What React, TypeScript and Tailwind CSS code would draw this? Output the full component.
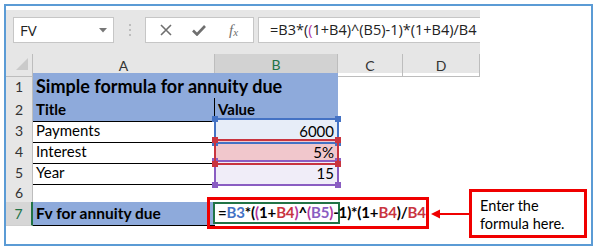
import React from "react";

const LATO = "[font-family:Lato,'Noto_Sans',sans-serif]";

function RowHead({ n, sel }: { n: number; sel?: boolean }) {
  return (
    <div
      className={
        "flex items-center justify-center border-b border-[#cfcfcf] text-[14px] " +
        LATO +
        (sel
          ? " bg-[#d6d6d6] text-[#217346] border-r-2 border-r-[#217346]"
          : " bg-[#e6e6e6] text-[#333] border-r border-r-[#bdbdbd]")
      }
    >
      {n}
    </div>
  );
}

function Range({ color, top }: { color: string; top?: boolean }) {
  const sq = "absolute w-[6px] h-[6px]";
  const z = top ? " z-20" : " z-10";
  return (
    <>
      <div className={"absolute left-[-1px] right-[-1px] top-[-1px] bottom-[-1px] border-2 pointer-events-none" + z} style={{ borderColor: color }} />
      <div className={sq + " left-[-3px] top-[-3px]" + z} style={{ background: color }} />
      <div className={sq + " right-[-3px] top-[-3px]" + z} style={{ background: color }} />
      <div className={sq + " left-[-3px] bottom-[-3px]" + z} style={{ background: color }} />
      <div className={sq + " right-[-3px] bottom-[-3px]" + z} style={{ background: color }} />
    </>
  );
}

const BLUE = "#4472c4";
const RED = "#c9343f";
const PURPLE = "#8a5dc2";
const MAG = "#b0359e";

export default function App() {
  const row = "grid grid-cols-[27px_182px_123px_65px_77px]";
  return (
    <div className="w-[598px] h-[252px] bg-white pt-[4px] pl-[4px] overflow-hidden">
      <div className="relative w-[589px] h-[242px] border-2 border-[#5b9bd5] pt-[4px] bg-white">
        <div className="w-[474px] bg-[#e6e6e6]">
          {/* formula bar */}
          <div className="h-[44px] flex items-start pt-[7px] pl-[7px]">
            <div className="w-[101px] h-[26px] bg-white border border-[#c6c6c6] flex items-center justify-between pl-[6px] pr-[6px]">
              <span className="text-[15px] text-[#222] [font-family:'Open_Sans',sans-serif]">FV</span>
              <svg width="8" height="5" viewBox="0 0 8 5"><polygon points="0,0 8,0 4,4.5" fill="#777" /></svg>
            </div>
            <div className="w-[31px] h-[26px] flex flex-col items-center justify-center gap-[3px]">
              <div className="w-[2px] h-[2px] bg-[#bdbdbd]" />
              <div className="w-[2px] h-[2px] bg-[#bdbdbd]" />
              <div className="w-[2px] h-[2px] bg-[#bdbdbd]" />
            </div>
            <div className="w-[109px] h-[26px] bg-white border border-[#c6c6c6] flex items-center">
              <div className="w-[38px] flex justify-center pl-[2px]">
                <svg width="12" height="12" viewBox="0 0 12 12"><path d="M1 1 L11 11 M11 1 L1 11" stroke="#6f6f6f" strokeWidth="1.6" /></svg>
              </div>
              <div className="w-[30px] flex justify-center">
                <svg width="14" height="11" viewBox="0 0 14 11"><path d="M1 5.5 L5 9.5 L13 1" stroke="#6f6f6f" strokeWidth="2.6" fill="none" /></svg>
              </div>
              <div className="flex-1 flex justify-center text-[#6f6f6f] [font-family:'Liberation_Serif',serif] italic text-[15px] leading-none">
                <span>f</span><span className="text-[11px] mt-[4px]">x</span>
              </div>
            </div>
            <div className="ml-[4px] flex-1 h-[26px] bg-white border-y border-l border-[#c6c6c6] flex items-center pl-[11px] whitespace-nowrap text-[14.5px] text-[#222] [font-family:'Open_Sans',sans-serif]">
              =B3*(<span style={{ color: MAG }}>(</span>1+B4)^(B5)-1)*(1+B4)/B4
            </div>
          </div>
          {/* column headers */}
          <div className={row + " h-[19px] text-[14px] text-[#333] " + LATO}>
            <div className="bg-[#e6e6e6] border-r border-b border-[#bdbdbd] relative">
              <svg className="absolute left-[9px] top-[4px]" width="14" height="13" viewBox="0 0 14 13"><polygon points="13,0 13,12 1,12" fill="#cacaca" /></svg>
            </div>
            <div className="flex items-center justify-center border-r border-b border-[#bdbdbd]">A</div>
            <div className="flex items-center justify-center bg-[#d2d2d2] border-r border-r-[#bdbdbd] border-b-2 border-b-[#217346] text-[#217346]">B</div>
            <div className="flex items-center justify-center border-r border-b border-[#bdbdbd]">C</div>
            <div className="flex items-center justify-center border-r border-b border-[#bdbdbd]">D</div>
          </div>
          {/* row 1 */}
          <div className={row + " h-[25px] bg-white text-black " + LATO}>
            <RowHead n={1} />
            <div className="col-span-2 bg-[#8eaadb] border-b border-black flex items-center pl-[3px] font-bold text-[18px]">Simple formula for annuity due</div>
            <div />
            <div />
          </div>
          {/* row 2 */}
          <div className={row + " h-[21px] bg-white text-black text-[15px] " + LATO}>
            <RowHead n={2} />
            <div className="bg-[#8eaadb] border-b border-r border-black flex items-center pl-[3px] font-bold">Title</div>
            <div className="bg-[#8eaadb] border-b border-black flex items-center pl-[3px] font-bold">Value</div>
            <div />
            <div />
          </div>
          {/* row 3 */}
          <div className={row + " h-[21px] bg-white text-black text-[15px] " + LATO}>
            <RowHead n={3} />
            <div className="border-b border-black flex items-center pl-[3px]">Payments</div>
            <div className="relative bg-[#e7edf8] flex items-center justify-end pr-[4px]">
              6000
              <Range color={BLUE} />
            </div>
            <div />
            <div />
          </div>
          {/* row 4 */}
          <div className={row + " h-[21px] bg-white text-black text-[15px] " + LATO}>
            <RowHead n={4} />
            <div className="border-b border-black flex items-center pl-[3px]">Interest</div>
            <div className="relative bg-[#f1c7cc] flex items-center justify-end pr-[4px]">
              5%
              <Range color={RED} top />
            </div>
            <div />
            <div />
          </div>
          {/* row 5 */}
          <div className={row + " h-[21px] bg-white text-black text-[15px] " + LATO}>
            <RowHead n={5} />
            <div className="border-b border-black flex items-center pl-[3px]">Year</div>
            <div className="relative bg-[#f0edf8] flex items-center justify-end pr-[4px]">
              15
              <Range color={PURPLE} />
            </div>
            <div />
            <div />
          </div>
          {/* row 6 */}
          <div className={row + " h-[20px] bg-white text-black text-[15px] " + LATO}>
            <RowHead n={6} />
            <div className="border-b border-black" />
            <div />
            <div />
            <div />
          </div>
          {/* row 7 */}
          <div className={row + " h-[21px] bg-white text-black text-[15px] " + LATO}>
            <RowHead n={7} sel />
            <div className="bg-[#8eaadb] border-b border-black flex items-center pl-[3px] font-bold text-[15.5px]">Fv for annuity due</div>
            <div className="relative">
              <div className="absolute left-[-2px] top-0 w-[127px] h-[22px] border-2 border-[#217346]" />
              <div className="absolute left-[3px] top-0 h-[21px] flex items-center whitespace-nowrap font-bold text-[15px] tracking-[-0.15px]">
                <span>=</span>
                <span style={{ color: BLUE }}>B3</span>
                <span>*(</span>
                <span style={{ color: MAG }}>(</span>
                <span>1+</span>
                <span style={{ color: RED }}>B4</span>
                <span style={{ color: MAG }}>)</span>
                <span>^</span>
                <span style={{ color: MAG }}>(</span>
                <span style={{ color: PURPLE }}>B5</span>
                <span style={{ color: MAG }}>)</span>
                <span>-1)*(1+</span>
                <span style={{ color: RED }}>B4</span>
                <span>)/</span>
                <span style={{ color: RED }}>B4</span>
              </div>
            </div>
            <div />
            <div />
          </div>
        </div>

        {/* annotations */}
        <div className="absolute left-[201px] top-[191px] w-[222px] h-[32px] border-[3px] border-[#f00000]" />
        <svg className="absolute left-[424px] top-[201px]" width="40" height="14" viewBox="0 0 40 14">
          <line x1="8" y1="7" x2="40" y2="7" stroke="#f00000" strokeWidth="2" />
          <polygon points="1,7 10,2.5 10,11.5" fill="#f00000" />
        </svg>
        <div className={"absolute left-[463px] top-[183px] w-[118px] h-[49px] border-[3px] border-[#f00000] bg-white pl-[8px] pt-[5px] text-[14.5px] leading-[18px] text-black " + LATO}>
          Enter the
          <br />
          formula here.
        </div>
      </div>
    </div>
  );
}
